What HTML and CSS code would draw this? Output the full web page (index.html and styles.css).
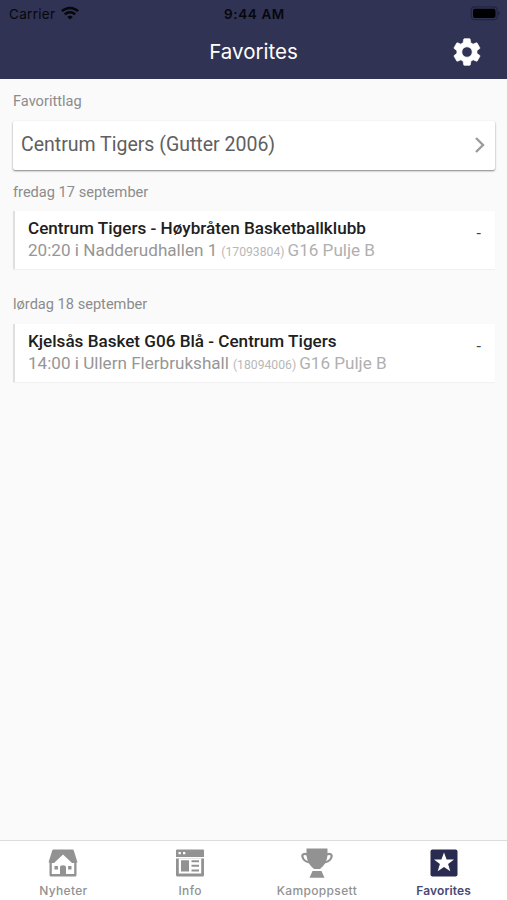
FILE: index.html
```html
<!DOCTYPE html>
<html lang="no">
<head>
<meta charset="utf-8">
<title>Favorites</title>
<link rel="stylesheet" href="styles.css">
</head>
<body>
<div class="app">
  <header class="header">
    <div class="status">
      <div class="status-left"><span class="carrier">Carrier</span>
        <svg class="wifi" width="18" height="14" viewBox="0 0 18 14" fill="none" stroke="#07070c" stroke-width="2.5"><path d="M.9 5.2C5.5.9 12.5.9 17.1 5.2"/><path d="M3.8 8.4c3-2.8 7.4-2.8 10.4 0"/><path d="M9 13.6 6.2 10.9c1.5-1.5 4.1-1.5 5.6 0z" fill="#07070c" stroke="none"/></svg>
      </div>
      <span class="clock">9:44 AM</span>
      <svg class="battery" width="30" height="15" viewBox="0 0 30 15"><rect x="1.2" y=".9" width="26" height="12.8" rx="3.5" fill="none" stroke="#22243f" stroke-width="1.2"/><rect x="3" y="2.7" width="22.5" height="9.2" rx="2" fill="#000"/><path d="M28.4 5.2c1.4.7 1.4 3.4 0 4.1z" fill="#1b1c32"/></svg>
    </div>
    <div class="navbar">
      <h1 class="title">Favorites</h1>
      <svg class="gear" width="32" height="32" viewBox="0 0 24 24" fill="#fff" stroke="#fff" stroke-width=".5" stroke-linejoin="round"><path d="M19.4 13c0-.3.1-.6.1-1s0-.7-.1-1l2.1-1.600c.2-.1.2-.4.1-.6l-2-3.500c-.1-.2-.4-.3-.6-.2l-2.500 1c-.5-.4-1.100-.7-1.700-1l-.4-2.600c0-.3-.2-.5-.4-.5h-4c-.2 0-.4.2-.5.4l-.4 2.700c-.6.3-1.200.6-1.700 1l-2.500-1c-.2-.1-.5 0-.6.2l-2 3.500c-.1.2-.1.5.1.6l2.100 1.600c0 .3-.1.6-.1 1s0 .7.1 1l-2.100 1.600c-.2.1-.2.4-.1.6l2 3.500c.1.2.4.3.6.2l2.500-1c.5.4 1.100.7 1.700 1l.4 2.600c0 .3.2.5.5.5h4c.2 0 .4-.2.5-.4l.4-2.700c.6-.3 1.200-.6 1.700-1l2.500 1c.2.1.5 0 .6-.2l2-3.500c.1-.2.1-.5-.1-.6zM12 15.900a3.900 3.900 0 1 1 0-7.800 3.900 3.900 0 0 1 0 7.800z" fill-rule="evenodd"/></svg>
    </div>
  </header>
  <main class="content">
    <h2 class="label label-team">Favorittlag</h2>
    <div class="team"><span class="team-name">Centrum Tigers (Gutter 2006)</span>
      <svg width="12" height="18" viewBox="0 0 12 18" fill="none" stroke="#9b9b9b" stroke-width="2.4"><path d="m2 2 7 7-7 7"/></svg>
    </div>
    <h2 class="label label-date">fredag 17 september</h2>
    <div class="match">
      <div class="match-info">
        <div class="teams">Centrum Tigers - Høybråten Basketballklubb</div>
        <div class="details"><span class="place">20:20 i Nadderudhallen 1</span><span class="number">(17093804)</span><span class="group">G16 Pulje B</span></div>
      </div>
      <span class="score">-</span>
    </div>
    <h2 class="label label-next">lørdag 18 september</h2>
    <div class="match">
      <div class="match-info">
        <div class="teams">Kjelsås Basket G06 Blå - Centrum Tigers</div>
        <div class="details"><span class="place">14:00 i Ullern Flerbrukshall</span><span class="number">(18094006)</span><span class="group">G16 Pulje B</span></div>
      </div>
      <span class="score">-</span>
    </div>
  </main>
  <nav class="tabs">
    <div class="tab">
      <svg width="30" height="30" viewBox="0 0 30 30"><path d="M5.500 1.500h19q1 0 1.300 1L29.500 14.500h-1V27a1.500 1.500 0 0 1-1.500 1.500H3A1.500 1.500 0 0 1 1.500 27V14.500h-1L4.200 2.500q.3-1 1.300-1z" fill="#929292"/><path d="m15 6.500 9 8.500h2.200v11H18v-6.500q0-2.300-3-2.300t-3 2.300V26H3.800V15H6z" fill="#fff"/><path d="M6.500 18h3.400v3.400H6.500zm13.600 0h3.400v3.400h-3.400z" fill="#929292"/></svg>
      <span class="tab-label">Nyheter</span>
    </div>
    <div class="tab">
      <svg width="30" height="30" viewBox="0 0 30 30"><path d="M2 1.500h26a1 1 0 0 1 1 1V9H1V2.500a1 1 0 0 1 1-1zM1 10.500h28V27a1.500 1.500 0 0 1-1.500 1.500h-25A1.500 1.500 0 0 1 1 27z" fill="#929292"/><path d="M3.500 4h2.300v2.200H3.500zm4.500 0h2.300v2.200H8zM3.800 10.500h22.400v15H3.800z" fill="#fff"/><path d="M6 12.200h8v11.300H6zm10.500 0H24v2h-7.500zm0 4.600H24v2h-7.500zm0 4.600H24v2h-7.500z" fill="#929292"/></svg>
      <span class="tab-label">Info</span>
    </div>
    <div class="tab">
      <svg class="cup" width="34" height="30" viewBox="0 0 34 30"><path d="M6.500.5h21v5c0 8.500-4 12.500-7.500 15.500h-6C10.500 18 6.500 14 6.500 5.500z" fill="#929292"/><path d="M7.500 6.500C4 5 1.800 6.300 2.500 9c.8 3.300 4.800 5.500 9.300 5.500M26.500 6.500c3.500-1.500 5.700-.2 5 2.500-.8 3.300-4.800 5.500-9.300 5.500" fill="none" stroke="#929292" stroke-width="2.200"/><path d="M12.500 23h9l3 6.700h-15z" fill="#929292"/></svg>
      <span class="tab-label">Kampoppsett</span>
    </div>
    <div class="tab active">
      <svg width="30" height="30" viewBox="0 0 30 30"><rect x="1.500" y="1.500" width="27" height="27" rx="2" fill="#292b50"/><path d="m15 4.500 2.600 7h7.400l-5.900 4.600 2.200 7.200-6.300-4.300-6.300 4.300 2.200-7.200L5 11.500h7.400z" fill="#fff"/></svg>
      <span class="tab-label">Favorites</span>
    </div>
  </nav>
</div>
</body>
</html>
```
FILE: styles.css
```css
* { box-sizing: border-box; }
body { margin: 0; background: #fafafa; font-family: Roboto, sans-serif; }
.app { display: flex; flex-direction: column; height: 900px; white-space: nowrap; }
.header { height: 79px; background: #303353; }
.status { display: grid; grid-template-columns: 1fr auto 1fr; align-items: center; height: 27px; padding: 0 7px 0 9px; font-family: Inter, sans-serif; color: #07070c; }
.status-left { display: flex; align-items: center; gap: 6px; font-size: 13.5px; }
.wifi { margin-top: -2px; }
.carrier { letter-spacing: .3px; }
.clock { font-size: 13.5px; font-weight: 600; letter-spacing: .6px; }
.battery { justify-self: end; }
.navbar { display: grid; grid-template-columns: 1fr auto 1fr; align-items: center; height: 50px; padding: 0 24px; }
.title { grid-column: 2; margin: 0; color: #fff; font: 400 20.5px/28px Inter, sans-serif; }
.gear { justify-self: end; }
.content { flex: 1; padding: 12px 12px 0 13px; }
.label { margin: 0; height: 20px; color: #8c8c8c; font-weight: 400; font-size: 14.6px; line-height: 20px; }
.team { display: flex; align-items: center; justify-content: space-between; height: 49px; margin: 10px 0 12px; padding: 0 9px 2px 8px; border-radius: 2px; background: #fff; box-shadow: 0 1px 2px rgba(0,0,0,.48); color: #606060; font-size: 19.5px; }
.match { display: flex; justify-content: space-between; height: 58px; margin-top: 9px; padding: 6px 14px 0 13px; border-left: 2px solid #dfdfdf; background: #fff; box-shadow: 0 1px 1px rgba(0,0,0,.035); }
.label-next { margin-top: 25px; }
.label-next + .match { margin-top: 10px; }
.teams { height: 22px; color: #202020; font-size: 17.1px; font-weight: 500; line-height: 22px; }
.details { display: flex; align-items: baseline; color: #969696; font-size: 17.1px; line-height: 22px; }
.number { margin: 0 3px 0 4px; color: #b8b8b8; font-size: 12.2px; }
.group { color: #b0b0b0; }
.score { margin-top: 7px; color: #444; font-size: 16px; line-height: 20px; }
.tabs { display: grid; grid-template-columns: repeat(4, 1fr); height: 60px; border-top: 1px solid #dcdcdc; background: #fff; }
.tab { display: flex; flex-direction: column; align-items: center; padding-top: 7px; color: #929292; font: 500 12px/16px Inter, sans-serif; }
.tab-label { margin-top: 5px; letter-spacing: .35px; }
.active { color: #484a73; font-weight: 600; }
.active .tab-label { letter-spacing: .15px; }
```
